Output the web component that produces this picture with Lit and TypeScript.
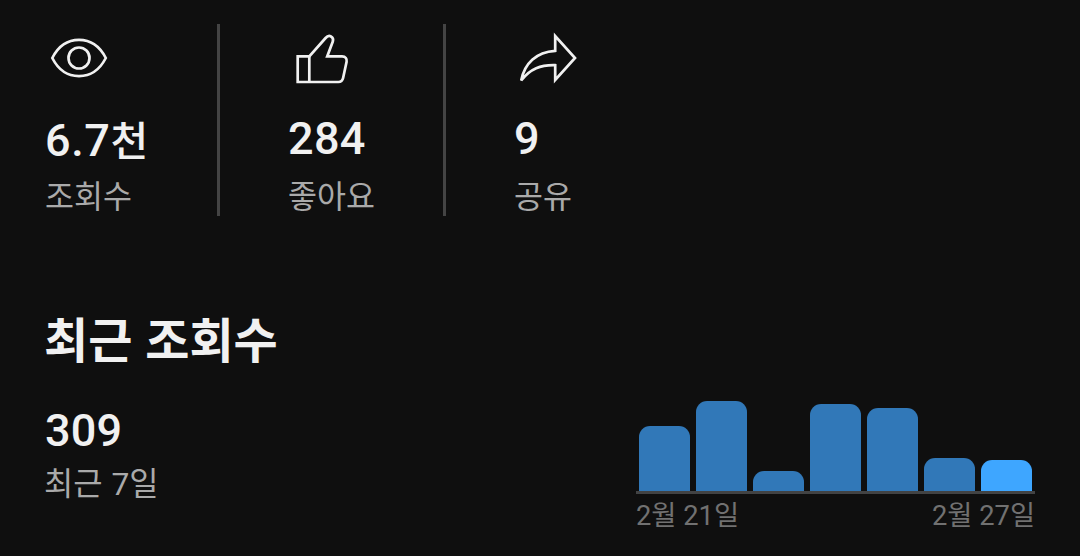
import { LitElement, html, svg, css } from 'lit';
import { styleMap } from 'lit/directives/style-map.js';

const ICONS = {
  views: svg`
    <path d="M7.3 34C13 22.8 22.5 15.9 34 15.9S55 22.8 60.8 34C55 45.2 45.5 52.1 34 52.1S13 45.2 7.3 34Z" />
    <circle cx="34" cy="34" r="10.5" />
  `,
  likes: svg`
    <path d="M9.7 32.4H21.3L37.6 14C41 10 46.2 12.6 44.8 17.6L39.2 32.4H54C57.6 32.4 59.2 34.8 58.6 37.8L55.1 54C54.5 56.6 53 58 50.4 58H9.7Z" />
    <path d="M21.3 32.4V58" />
  `,
  shares: svg`
    <path d="M7.2 56.4C10.5 39.5 22 28 41.2 26.8V12L61 34L41.2 56V41.2C26.5 40.8 16.5 44.7 7.2 56.4Z" />
  `,
};

class StatItem extends LitElement {
  static properties = {
    icon: { type: String },
    value: { type: String },
    unit: { type: String },
    label: { type: String },
  };

  static styles = css`
    :host {
      display: block;
      box-sizing: border-box;
      height: 192px;
    }

    .icon {
      display: block;
      width: 68px;
      height: 68px;
      fill: none;
      stroke: #f1f1f1;
      stroke-width: 2.7;
    }

    .value {
      display: flex;
      align-items: baseline;
      height: 56px;
      margin-top: 19px;
      font-size: 45px;
      font-weight: 500;
      line-height: 56px;
      letter-spacing: 0.3px;
      color: #f1f1f1;
      white-space: nowrap;
    }

    .value.with-unit {
      padding-top: 2px;
      margin-bottom: -2px;
      letter-spacing: 0.6px;
    }

    .unit {
      font-size: 41px;
      line-height: 50px;
      letter-spacing: 0;
    }

    .label {
      margin-top: 11px;
      font-size: 31.5px;
      line-height: 40px;
      color: #aaa;
      white-space: nowrap;
    }
  `;

  icon = 'views';
  value = '';
  unit = '';
  label = '';

  render() {
    return html`
      <svg class="icon" viewBox="0 0 68 68">${ICONS[this.icon]}</svg>
      ${this.unit
        ? html`<div class="value with-unit">
            <span>${this.value}</span><span class="unit">${this.unit}</span>
          </div>`
        : html`<div class="value">${this.value}</div>`}
      <div class="label">${this.label}</div>
    `;
  }
}

customElements.define('stat-item', StatItem);

class ViewsChart extends LitElement {
  static properties = {
    bars: { type: Array },
    from: { type: String },
    to: { type: String },
  };

  static styles = css`
    :host {
      display: block;
      width: 399px;
    }

    .bars {
      display: flex;
      align-items: flex-end;
      gap: 6px;
      height: 90px;
      padding: 0 3px;
      border-bottom: 3px solid #424344;
    }

    .bar {
      flex: 1;
      border-radius: 11px 11px 0 0;
      background: #3178b8;
    }

    .bar:last-child {
      background: #3ea6ff;
    }

    .dates {
      display: flex;
      justify-content: space-between;
      margin-top: 4px;
      font-size: 27.3px;
      line-height: 36px;
      color: #717171;
      white-space: nowrap;
    }
  `;

  bars = [];
  from = '';
  to = '';

  render() {
    return html`
      <div class="bars">
        ${this.bars.map(
          height => html`<div class="bar" style=${styleMap({ height: `${height}px` })}></div>`
        )}
      </div>
      <div class="dates">
        <span>${this.from}</span>
        <span>${this.to}</span>
      </div>
    `;
  }
}

customElements.define('views-chart', ViewsChart);

class AppRoot extends LitElement {
  static styles = css`
    :host {
      display: block;
      box-sizing: border-box;
      height: 556px;
      padding: 24px 45px 0;
      overflow: hidden;
      background: #0f0f0f;
      font-family: Roboto, 'Noto Sans CJK KR', sans-serif;
    }

    .stats {
      display: flex;
    }

    stat-item {
      width: 226px;
      padding-left: 68px;
      border-right: 3px solid #444;
    }

    stat-item:first-child {
      width: 175px;
      padding-left: 0;
    }

    stat-item:last-child {
      border-right: 0;
    }

    h2 {
      margin: 94px 0 0 -1px;
      font-size: 48px;
      font-weight: 700;
      line-height: 64px;
      word-spacing: 1px;
      color: #f1f1f1;
    }

    .recent {
      display: flex;
      justify-content: space-between;
      margin-top: 27px;
    }

    .total {
      margin-top: 2px;
      font-size: 45px;
      font-weight: 500;
      line-height: 56px;
      letter-spacing: 0.2px;
      color: #f1f1f1;
    }

    .period {
      margin: 5px 0 0 -1px;
      font-size: 31.8px;
      line-height: 40px;
      word-spacing: 1px;
      color: #aaa;
    }
  `;

  render() {
    return html`
      <div class="stats">
        <stat-item icon="views" value="6.7" unit="천" label="조회수"></stat-item>
        <stat-item icon="likes" value="284" label="좋아요"></stat-item>
        <stat-item icon="shares" value="9" label="공유"></stat-item>
      </div>
      <h2>최근 조회수</h2>
      <div class="recent">
        <div>
          <div class="total">309</div>
          <div class="period">최근 7일</div>
        </div>
        <views-chart
          .bars=${[65, 90, 20, 87, 83, 33, 31]}
          from="2월 21일"
          to="2월 27일"
        ></views-chart>
      </div>
    `;
  }
}

customElements.define('app-root', AppRoot);
